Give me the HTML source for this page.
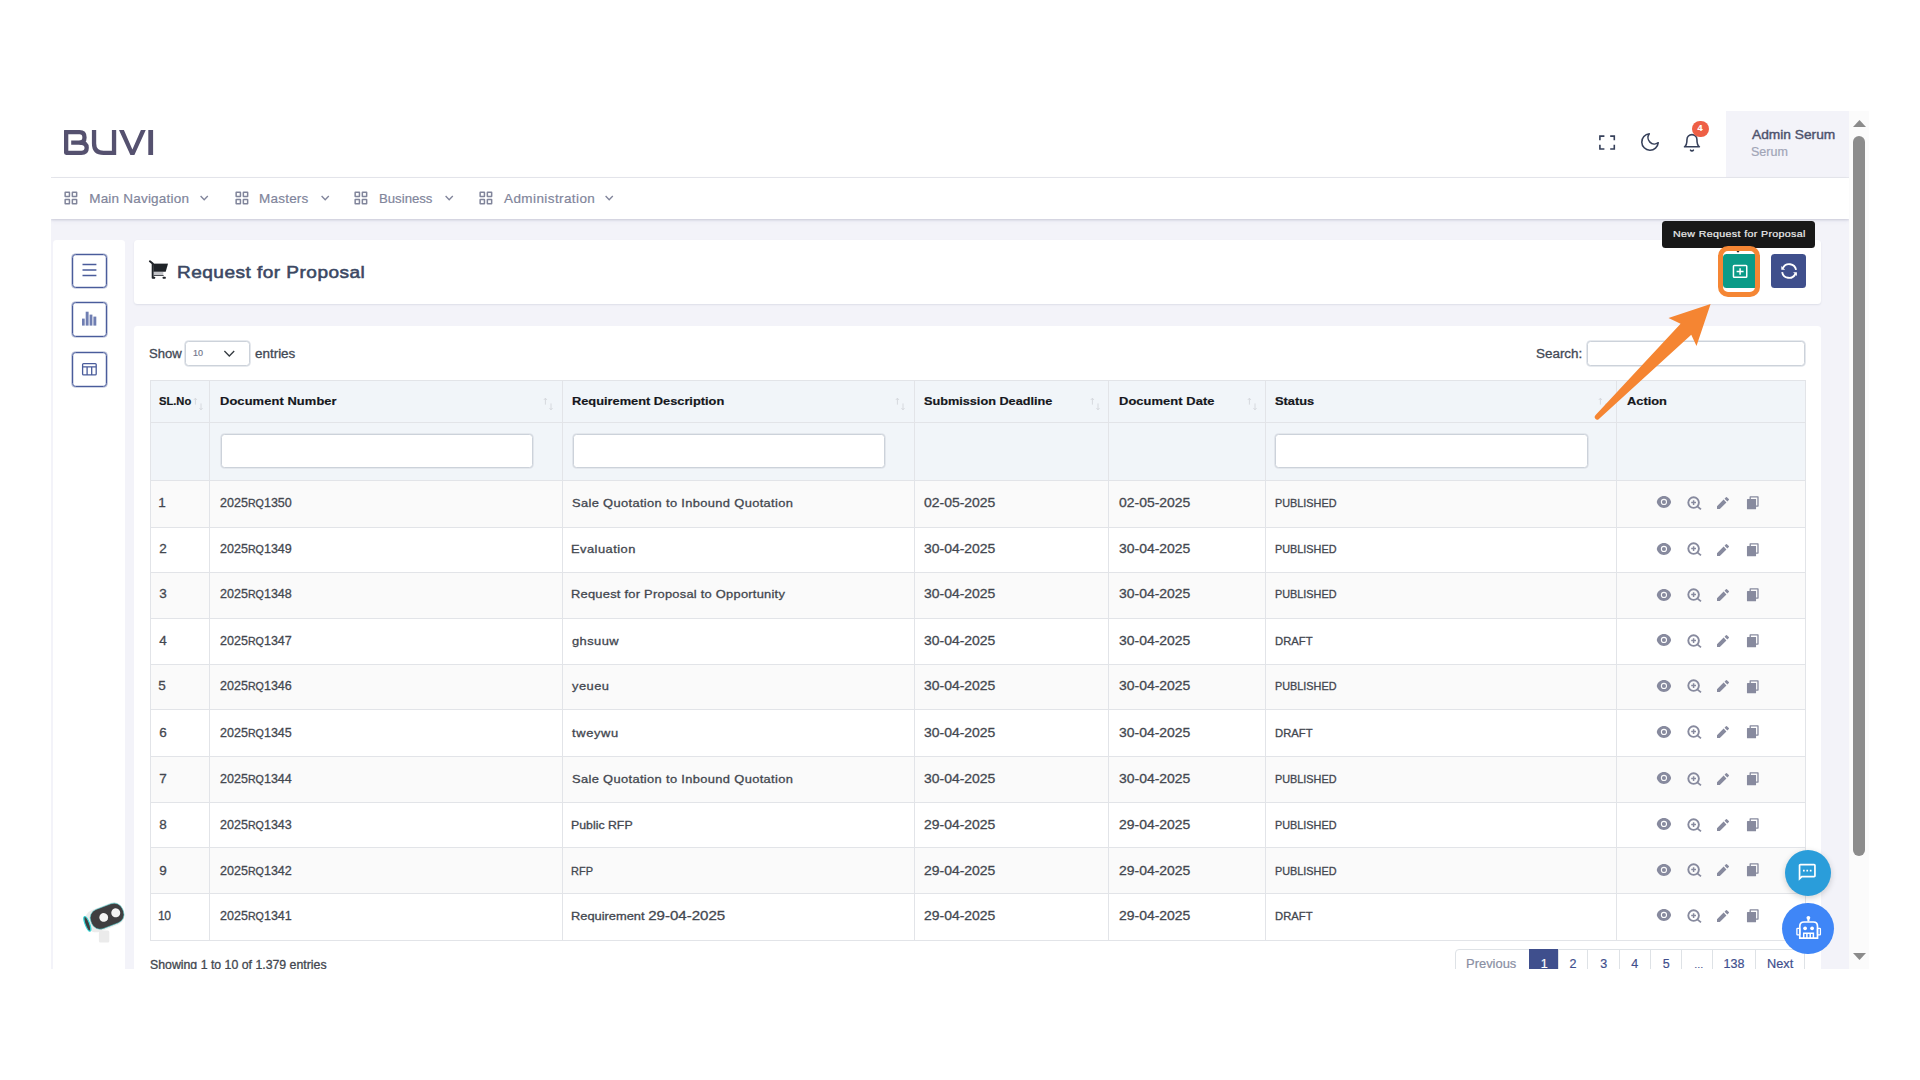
<!DOCTYPE html>
<html><head><meta charset="utf-8"><title>Request for Proposal</title>
<style>
html,body{margin:0;padding:0}
body{width:1920px;height:1080px;background:#fff;position:relative;overflow:hidden;font-family:"Liberation Sans",sans-serif}
#shot{position:absolute;left:51px;top:111px;width:1818px;height:858px;overflow:hidden;background:#f3f3f9}
#o{position:absolute;left:-51px;top:-111px;width:1920px;height:1080px}
#o div,#o svg,#o span.t{position:absolute}
span.t{white-space:nowrap;line-height:1;transform-origin:0 50%;-webkit-text-stroke-width:.2px}
span.m{-webkit-text-stroke-width:.55px}
span.u{-webkit-text-stroke-width:.38px}
span.c{-webkit-text-stroke-width:.3px}
.dg{font-size:1.174em}
</style></head><body><div id="shot"><div id="o">
<div style="left:51px;top:111px;width:1798px;height:66px;background:#fff"></div>
<div style="left:51px;top:177px;width:1798px;height:1px;background:#e8e9ee"></div>
<div style="left:1725.6px;top:111px;width:123.2px;height:66px;background:#f3f3f9"></div>
<div style="left:51px;top:178px;width:1798px;height:41px;background:#fff;box-shadow:0 1px 2px rgba(40,45,90,.16),0 2px 5px rgba(40,45,90,.05)"></div>
<svg style="left:64px;top:130.1px" width="90" height="25" viewBox="0 0 90 25" ><g fill="none" stroke="#55516f" stroke-width="4.3" stroke-linejoin="round"><path d="M2.15 0.3V22.85H17.4Q22.7 22.85 22.7 17.7Q22.7 12.6 15.6 12.6"/><path d="M7.2 12.6H15.6Q20.5 12.6 20.5 7.4Q20.5 2.15 15.6 2.15H0.3" stroke-linecap="butt"/><path d="M30.05 0V13.5Q30.05 22.85 39.5 22.85H50.05V0" stroke-linejoin="miter"/></g><polygon fill="#55516f" points="55,0 59.9,0 68.4,19.6 76.9,0 81.75,0 70.4,25 66.4,25"/><rect fill="#55516f" x="84.3" y="0" width="4.8" height="25"/></svg>
<svg style="left:63.5px;top:190.8px" width="14" height="14" viewBox="0 0 14 14" ><g fill="none" stroke="#81859b" stroke-width="1.5" transform="translate(.5 .5)"><rect x=".65" y=".65" width="4.3" height="4.3" rx=".25"/><rect x="7.85" y=".65" width="4.3" height="4.3" rx=".25"/><rect x=".65" y="7.95" width="4.3" height="4.3" rx=".25"/><rect x="7.85" y="7.95" width="4.3" height="4.3" rx=".25"/></g></svg>
<svg style="left:234.5px;top:190.8px" width="14" height="14" viewBox="0 0 14 14" ><g fill="none" stroke="#81859b" stroke-width="1.5" transform="translate(.5 .5)"><rect x=".65" y=".65" width="4.3" height="4.3" rx=".25"/><rect x="7.85" y=".65" width="4.3" height="4.3" rx=".25"/><rect x=".65" y="7.95" width="4.3" height="4.3" rx=".25"/><rect x="7.85" y="7.95" width="4.3" height="4.3" rx=".25"/></g></svg>
<svg style="left:354.1px;top:190.8px" width="14" height="14" viewBox="0 0 14 14" ><g fill="none" stroke="#81859b" stroke-width="1.5" transform="translate(.5 .5)"><rect x=".65" y=".65" width="4.3" height="4.3" rx=".25"/><rect x="7.85" y=".65" width="4.3" height="4.3" rx=".25"/><rect x=".65" y="7.95" width="4.3" height="4.3" rx=".25"/><rect x="7.85" y="7.95" width="4.3" height="4.3" rx=".25"/></g></svg>
<svg style="left:478.5px;top:190.8px" width="14" height="14" viewBox="0 0 14 14" ><g fill="none" stroke="#81859b" stroke-width="1.5" transform="translate(.5 .5)"><rect x=".65" y=".65" width="4.3" height="4.3" rx=".25"/><rect x="7.85" y=".65" width="4.3" height="4.3" rx=".25"/><rect x=".65" y="7.95" width="4.3" height="4.3" rx=".25"/><rect x="7.85" y="7.95" width="4.3" height="4.3" rx=".25"/></g></svg>
<svg style="left:199px;top:193.6px" width="11" height="8" viewBox="0 0 11 8" ><path d="M1.6 2L5.2 5.7L8.8 2" fill="none" stroke="#81859b" stroke-width="1.35"/></svg>
<svg style="left:319.7px;top:193.6px" width="11" height="8" viewBox="0 0 11 8" ><path d="M1.6 2L5.2 5.7L8.8 2" fill="none" stroke="#81859b" stroke-width="1.35"/></svg>
<svg style="left:444px;top:193.6px" width="11" height="8" viewBox="0 0 11 8" ><path d="M1.6 2L5.2 5.7L8.8 2" fill="none" stroke="#81859b" stroke-width="1.35"/></svg>
<svg style="left:604px;top:193.6px" width="11" height="8" viewBox="0 0 11 8" ><path d="M1.6 2L5.2 5.7L8.8 2" fill="none" stroke="#81859b" stroke-width="1.35"/></svg>
<svg style="left:1598px;top:134px" width="19" height="18" viewBox="0 0 19 18" ><path d="M1.9 6.3V2.1H6.4M12.2 2.1H16.3V6.3M16.3 10.8V15H12.2M6.4 15H1.9V10.8" fill="none" stroke="#36405a" stroke-width="1.6"/></svg>
<svg style="left:1638.75px;top:131.15px" width="22" height="22" viewBox="0 0 24 24" ><path d="M21 12.79A9 9 0 1 1 11.21 3 7 7 0 0 0 21 12.79z" fill="none" stroke="#36405a" stroke-width="1.7" stroke-linejoin="round"/></svg>
<svg style="left:1681.6px;top:132.55px" width="19.9" height="19.5" viewBox="0 0 24 24" preserveAspectRatio="none"><g fill="none" stroke="#36405a" stroke-width="1.9" stroke-linecap="round" stroke-linejoin="round"><path d="M18 8A6 6 0 0 0 6 8c0 7-3 9-3 9h18s-3-2-3-9"/><path d="M13.73 21a2 2 0 0 1-3.46 0"/></g></svg>
<div style="left:1691.6px;top:121px;width:17.9px;height:15.6px;background:#ee5f45;border-radius:8px"></div>
<div style="left:1848.6px;top:111px;width:20.4px;height:858px;background:#fbfbfb"></div>
<svg style="left:1852.6px;top:119.8px" width="13" height="7" viewBox="0 0 13 7" ><path d="M0 7L6.5 0L13 7Z" fill="#8b8b8b"/></svg>
<div style="left:1853.1px;top:136.3px;width:12.1px;height:719.3px;background:#8c8c8c;border-radius:6px"></div>
<svg style="left:1852.6px;top:952.6px" width="13" height="7" viewBox="0 0 13 7" ><path d="M0 0L6.5 7L13 0Z" fill="#8b8b8b"/></svg>
<div style="left:52.5px;top:240.2px;width:72.4px;height:760px;background:#fff;border-radius:3.5px"></div>
<div style="left:72.2px;top:254px;width:34.4px;height:34.4px;box-sizing:border-box;border:1px solid #4a5c9b;border-radius:3.5px;box-shadow:0 0 0 .6px rgba(74,92,155,.5),inset 0 0 0 .5px rgba(74,92,155,.45)"></div>
<div style="left:72.2px;top:302.3px;width:34.4px;height:34.4px;box-sizing:border-box;border:1px solid #4a5c9b;border-radius:3.5px;box-shadow:0 0 0 .6px rgba(74,92,155,.5),inset 0 0 0 .5px rgba(74,92,155,.45)"></div>
<div style="left:72.2px;top:352.2px;width:34.4px;height:34.4px;box-sizing:border-box;border:1px solid #4a5c9b;border-radius:3.5px;box-shadow:0 0 0 .6px rgba(74,92,155,.5),inset 0 0 0 .5px rgba(74,92,155,.45)"></div>
<svg style="left:80px;top:262px" width="20" height="16" viewBox="0 0 20 16" ><path d="M2.5 2.5H16.4M2.5 8H16.4M2.5 13.4H16.4" stroke="#4a5c9b" stroke-width="1.45" fill="none"/></svg>
<svg style="left:80px;top:310px" width="20" height="17" viewBox="0 0 20 17" ><g fill="#6f7eb2"><rect x="2" y="8.6" width="2.7" height="7"/><rect x="5.7" y="1.7" width="2.9" height="13.9"/><rect x="9.6" y="4.6" width="2.8" height="11"/><rect x="13.4" y="6.6" width="2.9" height="9"/></g></svg>
<svg style="left:80px;top:361px" width="20" height="17" viewBox="0 0 20 17" ><g fill="none" stroke="#4a5c9b" stroke-width="1.3"><rect x="2.6" y="2.6" width="13.6" height="11.3" rx="1"/><path d="M2.6 5.9H16.2M7.1 5.9V13.9M11.7 5.9V13.9"/></g></svg>
<svg style="left:80px;top:895px" width="50" height="52" viewBox="0 0 50 52" ><rect x="18.9" y="35.5" width="10.4" height="12" rx="1.5" fill="#ebebeb"/><g transform="translate(-1.4 -0.5) rotate(-21 27 22)"><rect x="6" y="11" width="40" height="23" rx="10" fill="#ececec"/><rect x="11.5" y="12" width="34" height="20.5" rx="9" fill="#3f3e40" stroke="#55d9d9" stroke-width=".5"/><circle cx="24.9" cy="22.2" r="4.4" fill="#f4f4f4"/><circle cx="37.8" cy="22.2" r="4.5" fill="#f4f4f4"/><ellipse cx="7.3" cy="22.3" rx="2.2" ry="7.8" fill="#3f3e40" stroke="#35d6d6" stroke-width="1.2"/></g></svg>
<div style="left:134px;top:240.2px;width:1687.3px;height:63.4px;background:#fff;border-radius:3.5px;box-shadow:0 1px 2px rgba(40,50,90,.10)"></div>
<svg style="left:148px;top:259px" width="22" height="22" viewBox="0 0 22 22" ><path d="M1.9 2.3L5 4.8" stroke="#20242a" stroke-width="2" stroke-linecap="round" fill="none"/><rect x="3.7" y="4.4" width="2" height="14.9" fill="#20242a"/><polygon points="5.2,4.7 20,4.7 17.7,12.7 5.6,12.7" fill="#1f2328"/><rect x="5.7" y="4.2" width="14.2" height=".6" fill="#9a9ca0"/><rect x="5.9" y="13" width="9.4" height="3" fill="#c3c4c8"/><rect x="5.7" y="16" width="9.9" height="1" fill="#4a4d52"/><rect x="4.2" y="17.7" width="2.9" height="2.1" rx=".5" fill="#20242a"/><rect x="14.7" y="17.7" width="3" height="2.1" rx=".5" fill="#20242a"/></svg>
<div style="left:1722.6px;top:253.9px;width:35px;height:34.6px;background:#0a9b88;border-radius:3.5px"></div>
<svg style="left:1731px;top:263px" width="18" height="17" viewBox="0 0 18 17" ><g fill="none" stroke="#fff" stroke-width="1.5"><rect x="2.45" y="2.55" width="13.3" height="11.8" rx=".8"/><path d="M9.1 5.2V11.7M5.6 8.45H12.6"/></g></svg>
<div style="left:1771.3px;top:253.9px;width:34.6px;height:34.6px;background:#3f4f8c;border-radius:3.5px"></div>
<svg style="left:1779px;top:261.3px" width="20" height="20" viewBox="0 0 20 20" ><g transform="translate(20.2 0) scale(-1 1)"><g fill="none" stroke="#fff" stroke-width="1.9"><path d="M3.15 8.9A7 7 0 0 1 16.3 7"/><path d="M17.05 11.1A7 7 0 0 1 3.9 13"/></g><path d="M17.9 4.9V8.7H14.1Z M2.3 15.1V11.3H6.1Z" fill="#fff"/></g></svg>
<div style="left:1661.9px;top:221px;width:153px;height:27.1px;background:#181818;border-radius:3.5px"></div>
<svg style="left:1733.9px;top:248px" width="8" height="5" viewBox="0 0 8 5" ><path d="M0 0L4 4.8L8 0Z" fill="#181818"/></svg>
<div style="left:1718.1px;top:246px;width:41.7px;height:50.6px;box-sizing:border-box;border:5px solid #f58634;border-radius:10px"></div>
<div style="left:134px;top:326px;width:1687.3px;height:700px;background:#fff;border-radius:3.5px"></div>
<div style="left:184.7px;top:341.4px;width:65.8px;height:24.2px;border:1px solid #ccd2da;box-shadow:0 0 0 .8px #dfe3e9;border-radius:3.5px;background:#fff;box-sizing:border-box"></div>
<svg style="left:223px;top:349px" width="13" height="9" viewBox="0 0 13 9" ><path d="M1.4 2L6.3 7L11.2 2" fill="none" stroke="#343a40" stroke-width="1.3"/></svg>
<div style="left:1587.2px;top:341.4px;width:218.3px;height:24.2px;border:1px solid #ccd2da;box-shadow:0 0 0 .8px #dfe3e9;border-radius:3.5px;background:#fff;box-sizing:border-box"></div>
<div style="left:150.2px;top:380.4px;width:1655.1px;height:100px;background:#f1f5f9"></div>
<div style="left:150.2px;top:480.4px;width:1655.1px;height:46.7px;background:#fafafa"></div>
<div style="left:150.2px;top:572.7px;width:1655.1px;height:45.5px;background:#fafafa"></div>
<div style="left:150.2px;top:664px;width:1655.1px;height:45.7px;background:#fafafa"></div>
<div style="left:150.2px;top:756.5px;width:1655.1px;height:45.8px;background:#fafafa"></div>
<div style="left:150.2px;top:847.9px;width:1655.1px;height:45.7px;background:#fafafa"></div>
<div style="left:149.7px;top:380px;width:1656.1px;height:1px;background:#e2e4e8"></div>
<div style="left:149.7px;top:422px;width:1656.1px;height:1px;background:#e2e4e8"></div>
<div style="left:149.7px;top:480px;width:1656.1px;height:1px;background:#e2e4e8"></div>
<div style="left:149.7px;top:527px;width:1656.1px;height:1px;background:#e2e4e8"></div>
<div style="left:149.7px;top:572px;width:1656.1px;height:1px;background:#e2e4e8"></div>
<div style="left:149.7px;top:618px;width:1656.1px;height:1px;background:#e2e4e8"></div>
<div style="left:149.7px;top:664px;width:1656.1px;height:1px;background:#e2e4e8"></div>
<div style="left:149.7px;top:709px;width:1656.1px;height:1px;background:#e2e4e8"></div>
<div style="left:149.7px;top:756px;width:1656.1px;height:1px;background:#e2e4e8"></div>
<div style="left:149.7px;top:802px;width:1656.1px;height:1px;background:#e2e4e8"></div>
<div style="left:149.7px;top:847px;width:1656.1px;height:1px;background:#e2e4e8"></div>
<div style="left:149.7px;top:893px;width:1656.1px;height:1px;background:#e2e4e8"></div>
<div style="left:149.7px;top:940px;width:1656.1px;height:1px;background:#e2e4e8"></div>
<div style="left:150px;top:379.9px;width:1px;height:561.2px;background:#e2e4e8"></div>
<div style="left:209px;top:379.9px;width:1px;height:561.2px;background:#e2e4e8"></div>
<div style="left:562px;top:379.9px;width:1px;height:561.2px;background:#e2e4e8"></div>
<div style="left:914px;top:379.9px;width:1px;height:561.2px;background:#e2e4e8"></div>
<div style="left:1108px;top:379.9px;width:1px;height:561.2px;background:#e2e4e8"></div>
<div style="left:1265px;top:379.9px;width:1px;height:561.2px;background:#e2e4e8"></div>
<div style="left:1616px;top:379.9px;width:1px;height:561.2px;background:#e2e4e8"></div>
<div style="left:1805px;top:379.9px;width:1px;height:561.2px;background:#e2e4e8"></div>
<div style="left:220.8px;top:434.3px;width:312.5px;height:33.7px;border:1px solid #ccd2da;box-shadow:0 0 0 .8px #dfe3e9;border-radius:3.5px;background:#fff;box-sizing:border-box"></div>
<div style="left:572.5px;top:434.3px;width:312.5px;height:33.7px;border:1px solid #ccd2da;box-shadow:0 0 0 .8px #dfe3e9;border-radius:3.5px;background:#fff;box-sizing:border-box"></div>
<div style="left:1275px;top:434.3px;width:313px;height:33.7px;border:1px solid #ccd2da;box-shadow:0 0 0 .8px #dfe3e9;border-radius:3.5px;background:#fff;box-sizing:border-box"></div>
<svg style="left:191.5px;top:396px" width="14" height="16" viewBox="0 0 14 16" ><g stroke="#d6d9de" stroke-width="1" fill="none"><path d="M3.4 2.2V8.6M1.9 3.9L3.4 2.2L4.9 3.9"/><path d="M9 7.4V13.8M7.5 12.1L9 13.8L10.5 12.1"/></g></svg>
<svg style="left:542.3px;top:396px" width="14" height="16" viewBox="0 0 14 16" ><g stroke="#d6d9de" stroke-width="1" fill="none"><path d="M3.4 2.2V8.6M1.9 3.9L3.4 2.2L4.9 3.9"/><path d="M9 7.4V13.8M7.5 12.1L9 13.8L10.5 12.1"/></g></svg>
<svg style="left:894.3px;top:396px" width="14" height="16" viewBox="0 0 14 16" ><g stroke="#d6d9de" stroke-width="1" fill="none"><path d="M3.4 2.2V8.6M1.9 3.9L3.4 2.2L4.9 3.9"/><path d="M9 7.4V13.8M7.5 12.1L9 13.8L10.5 12.1"/></g></svg>
<svg style="left:1089px;top:396px" width="14" height="16" viewBox="0 0 14 16" ><g stroke="#d6d9de" stroke-width="1" fill="none"><path d="M3.4 2.2V8.6M1.9 3.9L3.4 2.2L4.9 3.9"/><path d="M9 7.4V13.8M7.5 12.1L9 13.8L10.5 12.1"/></g></svg>
<svg style="left:1246px;top:396px" width="14" height="16" viewBox="0 0 14 16" ><g stroke="#d6d9de" stroke-width="1" fill="none"><path d="M3.4 2.2V8.6M1.9 3.9L3.4 2.2L4.9 3.9"/><path d="M9 7.4V13.8M7.5 12.1L9 13.8L10.5 12.1"/></g></svg>
<svg style="left:1596.5px;top:396px" width="14" height="16" viewBox="0 0 14 16" ><g stroke="#d6d9de" stroke-width="1" fill="none"><path d="M3.4 2.2V8.6M1.9 3.9L3.4 2.2L4.9 3.9"/><path d="M9 7.4V13.8M7.5 12.1L9 13.8L10.5 12.1"/></g></svg>
<svg style="left:1656.1px;top:494.2px" width="15.9" height="15.9" viewBox="0 0 24 24" ><path fill="#878a9e" d="M1.181 12C2.121 6.88 6.608 3 12 3c5.392 0 9.878 3.88 10.819 9-.94 5.12-5.427 9-10.819 9-5.392 0-9.878-3.88-10.819-9zM12 16.7a4.7 4.7 0 1 0 0-9.4 4.7 4.7 0 0 0 0 9.4zm0-1.6a3.1 3.1 0 1 1 0-6.2 3.1 3.1 0 0 1 0 6.2z"/></svg>
<svg style="left:1685.5px;top:494.7px" width="17" height="16" viewBox="0 0 17 16" ><g fill="none" stroke="#878a9e"><circle cx="7.6" cy="7.6" r="5.3" stroke-width="1.9"/><path d="M11.6 11.6L15 14.4" stroke-width="1.8"/><path d="M5.2 7.6H10M7.6 5.2V10" stroke-width="1.5"/></g></svg>
<svg style="left:1715.2px;top:494.8px" width="16" height="16" viewBox="0 0 24 24" ><path fill="#878a9e" d="M12.9 6.858l4.242 4.243L7.242 21H3v-4.243l9.9-9.9zm1.414-1.414l2.121-2.122a1 1 0 0 1 1.414 0l2.829 2.829a1 1 0 0 1 0 1.414l-2.122 2.121-4.242-4.242z"/></svg>
<svg style="left:1745.3px;top:494.9px" width="15.6" height="15.6" viewBox="0 0 24 24" ><path fill="#878a9e" d="M7 6V3a1 1 0 0 1 1-1h12a1 1 0 0 1 1 1v14a1 1 0 0 1-1 1h-3v3c0 .552-.45 1-1.007 1H4.007A1.001 1.001 0 0 1 3 21l.003-14c0-.552.45-1 1.007-1H7zm2 0h8v10h2V4H9v2z"/></svg>
<svg style="left:1656.1px;top:540.9px" width="15.9" height="15.9" viewBox="0 0 24 24" ><path fill="#878a9e" d="M1.181 12C2.121 6.88 6.608 3 12 3c5.392 0 9.878 3.88 10.819 9-.94 5.12-5.427 9-10.819 9-5.392 0-9.878-3.88-10.819-9zM12 16.7a4.7 4.7 0 1 0 0-9.4 4.7 4.7 0 0 0 0 9.4zm0-1.6a3.1 3.1 0 1 1 0-6.2 3.1 3.1 0 0 1 0 6.2z"/></svg>
<svg style="left:1685.5px;top:541.4px" width="17" height="16" viewBox="0 0 17 16" ><g fill="none" stroke="#878a9e"><circle cx="7.6" cy="7.6" r="5.3" stroke-width="1.9"/><path d="M11.6 11.6L15 14.4" stroke-width="1.8"/><path d="M5.2 7.6H10M7.6 5.2V10" stroke-width="1.5"/></g></svg>
<svg style="left:1715.2px;top:541.5px" width="16" height="16" viewBox="0 0 24 24" ><path fill="#878a9e" d="M12.9 6.858l4.242 4.243L7.242 21H3v-4.243l9.9-9.9zm1.414-1.414l2.121-2.122a1 1 0 0 1 1.414 0l2.829 2.829a1 1 0 0 1 0 1.414l-2.122 2.121-4.242-4.242z"/></svg>
<svg style="left:1745.3px;top:541.6px" width="15.6" height="15.6" viewBox="0 0 24 24" ><path fill="#878a9e" d="M7 6V3a1 1 0 0 1 1-1h12a1 1 0 0 1 1 1v14a1 1 0 0 1-1 1h-3v3c0 .552-.45 1-1.007 1H4.007A1.001 1.001 0 0 1 3 21l.003-14c0-.552.45-1 1.007-1H7zm2 0h8v10h2V4H9v2z"/></svg>
<svg style="left:1656.1px;top:586.5px" width="15.9" height="15.9" viewBox="0 0 24 24" ><path fill="#878a9e" d="M1.181 12C2.121 6.88 6.608 3 12 3c5.392 0 9.878 3.88 10.819 9-.94 5.12-5.427 9-10.819 9-5.392 0-9.878-3.88-10.819-9zM12 16.7a4.7 4.7 0 1 0 0-9.4 4.7 4.7 0 0 0 0 9.4zm0-1.6a3.1 3.1 0 1 1 0-6.2 3.1 3.1 0 0 1 0 6.2z"/></svg>
<svg style="left:1685.5px;top:587px" width="17" height="16" viewBox="0 0 17 16" ><g fill="none" stroke="#878a9e"><circle cx="7.6" cy="7.6" r="5.3" stroke-width="1.9"/><path d="M11.6 11.6L15 14.4" stroke-width="1.8"/><path d="M5.2 7.6H10M7.6 5.2V10" stroke-width="1.5"/></g></svg>
<svg style="left:1715.2px;top:587.1px" width="16" height="16" viewBox="0 0 24 24" ><path fill="#878a9e" d="M12.9 6.858l4.242 4.243L7.242 21H3v-4.243l9.9-9.9zm1.414-1.414l2.121-2.122a1 1 0 0 1 1.414 0l2.829 2.829a1 1 0 0 1 0 1.414l-2.122 2.121-4.242-4.242z"/></svg>
<svg style="left:1745.3px;top:587.2px" width="15.6" height="15.6" viewBox="0 0 24 24" ><path fill="#878a9e" d="M7 6V3a1 1 0 0 1 1-1h12a1 1 0 0 1 1 1v14a1 1 0 0 1-1 1h-3v3c0 .552-.45 1-1.007 1H4.007A1.001 1.001 0 0 1 3 21l.003-14c0-.552.45-1 1.007-1H7zm2 0h8v10h2V4H9v2z"/></svg>
<svg style="left:1656.1px;top:632px" width="15.9" height="15.9" viewBox="0 0 24 24" ><path fill="#878a9e" d="M1.181 12C2.121 6.88 6.608 3 12 3c5.392 0 9.878 3.88 10.819 9-.94 5.12-5.427 9-10.819 9-5.392 0-9.878-3.88-10.819-9zM12 16.7a4.7 4.7 0 1 0 0-9.4 4.7 4.7 0 0 0 0 9.4zm0-1.6a3.1 3.1 0 1 1 0-6.2 3.1 3.1 0 0 1 0 6.2z"/></svg>
<svg style="left:1685.5px;top:632.5px" width="17" height="16" viewBox="0 0 17 16" ><g fill="none" stroke="#878a9e"><circle cx="7.6" cy="7.6" r="5.3" stroke-width="1.9"/><path d="M11.6 11.6L15 14.4" stroke-width="1.8"/><path d="M5.2 7.6H10M7.6 5.2V10" stroke-width="1.5"/></g></svg>
<svg style="left:1715.2px;top:632.6px" width="16" height="16" viewBox="0 0 24 24" ><path fill="#878a9e" d="M12.9 6.858l4.242 4.243L7.242 21H3v-4.243l9.9-9.9zm1.414-1.414l2.121-2.122a1 1 0 0 1 1.414 0l2.829 2.829a1 1 0 0 1 0 1.414l-2.122 2.121-4.242-4.242z"/></svg>
<svg style="left:1745.3px;top:632.7px" width="15.6" height="15.6" viewBox="0 0 24 24" ><path fill="#878a9e" d="M7 6V3a1 1 0 0 1 1-1h12a1 1 0 0 1 1 1v14a1 1 0 0 1-1 1h-3v3c0 .552-.45 1-1.007 1H4.007A1.001 1.001 0 0 1 3 21l.003-14c0-.552.45-1 1.007-1H7zm2 0h8v10h2V4H9v2z"/></svg>
<svg style="left:1656.1px;top:677.8px" width="15.9" height="15.9" viewBox="0 0 24 24" ><path fill="#878a9e" d="M1.181 12C2.121 6.88 6.608 3 12 3c5.392 0 9.878 3.88 10.819 9-.94 5.12-5.427 9-10.819 9-5.392 0-9.878-3.88-10.819-9zM12 16.7a4.7 4.7 0 1 0 0-9.4 4.7 4.7 0 0 0 0 9.4zm0-1.6a3.1 3.1 0 1 1 0-6.2 3.1 3.1 0 0 1 0 6.2z"/></svg>
<svg style="left:1685.5px;top:678.3px" width="17" height="16" viewBox="0 0 17 16" ><g fill="none" stroke="#878a9e"><circle cx="7.6" cy="7.6" r="5.3" stroke-width="1.9"/><path d="M11.6 11.6L15 14.4" stroke-width="1.8"/><path d="M5.2 7.6H10M7.6 5.2V10" stroke-width="1.5"/></g></svg>
<svg style="left:1715.2px;top:678.4px" width="16" height="16" viewBox="0 0 24 24" ><path fill="#878a9e" d="M12.9 6.858l4.242 4.243L7.242 21H3v-4.243l9.9-9.9zm1.414-1.414l2.121-2.122a1 1 0 0 1 1.414 0l2.829 2.829a1 1 0 0 1 0 1.414l-2.122 2.121-4.242-4.242z"/></svg>
<svg style="left:1745.3px;top:678.5px" width="15.6" height="15.6" viewBox="0 0 24 24" ><path fill="#878a9e" d="M7 6V3a1 1 0 0 1 1-1h12a1 1 0 0 1 1 1v14a1 1 0 0 1-1 1h-3v3c0 .552-.45 1-1.007 1H4.007A1.001 1.001 0 0 1 3 21l.003-14c0-.552.45-1 1.007-1H7zm2 0h8v10h2V4H9v2z"/></svg>
<svg style="left:1656.1px;top:723.5px" width="15.9" height="15.9" viewBox="0 0 24 24" ><path fill="#878a9e" d="M1.181 12C2.121 6.88 6.608 3 12 3c5.392 0 9.878 3.88 10.819 9-.94 5.12-5.427 9-10.819 9-5.392 0-9.878-3.88-10.819-9zM12 16.7a4.7 4.7 0 1 0 0-9.4 4.7 4.7 0 0 0 0 9.4zm0-1.6a3.1 3.1 0 1 1 0-6.2 3.1 3.1 0 0 1 0 6.2z"/></svg>
<svg style="left:1685.5px;top:724px" width="17" height="16" viewBox="0 0 17 16" ><g fill="none" stroke="#878a9e"><circle cx="7.6" cy="7.6" r="5.3" stroke-width="1.9"/><path d="M11.6 11.6L15 14.4" stroke-width="1.8"/><path d="M5.2 7.6H10M7.6 5.2V10" stroke-width="1.5"/></g></svg>
<svg style="left:1715.2px;top:724.1px" width="16" height="16" viewBox="0 0 24 24" ><path fill="#878a9e" d="M12.9 6.858l4.242 4.243L7.242 21H3v-4.243l9.9-9.9zm1.414-1.414l2.121-2.122a1 1 0 0 1 1.414 0l2.829 2.829a1 1 0 0 1 0 1.414l-2.122 2.121-4.242-4.242z"/></svg>
<svg style="left:1745.3px;top:724.2px" width="15.6" height="15.6" viewBox="0 0 24 24" ><path fill="#878a9e" d="M7 6V3a1 1 0 0 1 1-1h12a1 1 0 0 1 1 1v14a1 1 0 0 1-1 1h-3v3c0 .552-.45 1-1.007 1H4.007A1.001 1.001 0 0 1 3 21l.003-14c0-.552.45-1 1.007-1H7zm2 0h8v10h2V4H9v2z"/></svg>
<svg style="left:1656.1px;top:770.3px" width="15.9" height="15.9" viewBox="0 0 24 24" ><path fill="#878a9e" d="M1.181 12C2.121 6.88 6.608 3 12 3c5.392 0 9.878 3.88 10.819 9-.94 5.12-5.427 9-10.819 9-5.392 0-9.878-3.88-10.819-9zM12 16.7a4.7 4.7 0 1 0 0-9.4 4.7 4.7 0 0 0 0 9.4zm0-1.6a3.1 3.1 0 1 1 0-6.2 3.1 3.1 0 0 1 0 6.2z"/></svg>
<svg style="left:1685.5px;top:770.8px" width="17" height="16" viewBox="0 0 17 16" ><g fill="none" stroke="#878a9e"><circle cx="7.6" cy="7.6" r="5.3" stroke-width="1.9"/><path d="M11.6 11.6L15 14.4" stroke-width="1.8"/><path d="M5.2 7.6H10M7.6 5.2V10" stroke-width="1.5"/></g></svg>
<svg style="left:1715.2px;top:770.9px" width="16" height="16" viewBox="0 0 24 24" ><path fill="#878a9e" d="M12.9 6.858l4.242 4.243L7.242 21H3v-4.243l9.9-9.9zm1.414-1.414l2.121-2.122a1 1 0 0 1 1.414 0l2.829 2.829a1 1 0 0 1 0 1.414l-2.122 2.121-4.242-4.242z"/></svg>
<svg style="left:1745.3px;top:771px" width="15.6" height="15.6" viewBox="0 0 24 24" ><path fill="#878a9e" d="M7 6V3a1 1 0 0 1 1-1h12a1 1 0 0 1 1 1v14a1 1 0 0 1-1 1h-3v3c0 .552-.45 1-1.007 1H4.007A1.001 1.001 0 0 1 3 21l.003-14c0-.552.45-1 1.007-1H7zm2 0h8v10h2V4H9v2z"/></svg>
<svg style="left:1656.1px;top:816.1px" width="15.9" height="15.9" viewBox="0 0 24 24" ><path fill="#878a9e" d="M1.181 12C2.121 6.88 6.608 3 12 3c5.392 0 9.878 3.88 10.819 9-.94 5.12-5.427 9-10.819 9-5.392 0-9.878-3.88-10.819-9zM12 16.7a4.7 4.7 0 1 0 0-9.4 4.7 4.7 0 0 0 0 9.4zm0-1.6a3.1 3.1 0 1 1 0-6.2 3.1 3.1 0 0 1 0 6.2z"/></svg>
<svg style="left:1685.5px;top:816.6px" width="17" height="16" viewBox="0 0 17 16" ><g fill="none" stroke="#878a9e"><circle cx="7.6" cy="7.6" r="5.3" stroke-width="1.9"/><path d="M11.6 11.6L15 14.4" stroke-width="1.8"/><path d="M5.2 7.6H10M7.6 5.2V10" stroke-width="1.5"/></g></svg>
<svg style="left:1715.2px;top:816.7px" width="16" height="16" viewBox="0 0 24 24" ><path fill="#878a9e" d="M12.9 6.858l4.242 4.243L7.242 21H3v-4.243l9.9-9.9zm1.414-1.414l2.121-2.122a1 1 0 0 1 1.414 0l2.829 2.829a1 1 0 0 1 0 1.414l-2.122 2.121-4.242-4.242z"/></svg>
<svg style="left:1745.3px;top:816.8px" width="15.6" height="15.6" viewBox="0 0 24 24" ><path fill="#878a9e" d="M7 6V3a1 1 0 0 1 1-1h12a1 1 0 0 1 1 1v14a1 1 0 0 1-1 1h-3v3c0 .552-.45 1-1.007 1H4.007A1.001 1.001 0 0 1 3 21l.003-14c0-.552.45-1 1.007-1H7zm2 0h8v10h2V4H9v2z"/></svg>
<svg style="left:1656.1px;top:861.7px" width="15.9" height="15.9" viewBox="0 0 24 24" ><path fill="#878a9e" d="M1.181 12C2.121 6.88 6.608 3 12 3c5.392 0 9.878 3.88 10.819 9-.94 5.12-5.427 9-10.819 9-5.392 0-9.878-3.88-10.819-9zM12 16.7a4.7 4.7 0 1 0 0-9.4 4.7 4.7 0 0 0 0 9.4zm0-1.6a3.1 3.1 0 1 1 0-6.2 3.1 3.1 0 0 1 0 6.2z"/></svg>
<svg style="left:1685.5px;top:862.2px" width="17" height="16" viewBox="0 0 17 16" ><g fill="none" stroke="#878a9e"><circle cx="7.6" cy="7.6" r="5.3" stroke-width="1.9"/><path d="M11.6 11.6L15 14.4" stroke-width="1.8"/><path d="M5.2 7.6H10M7.6 5.2V10" stroke-width="1.5"/></g></svg>
<svg style="left:1715.2px;top:862.3px" width="16" height="16" viewBox="0 0 24 24" ><path fill="#878a9e" d="M12.9 6.858l4.242 4.243L7.242 21H3v-4.243l9.9-9.9zm1.414-1.414l2.121-2.122a1 1 0 0 1 1.414 0l2.829 2.829a1 1 0 0 1 0 1.414l-2.122 2.121-4.242-4.242z"/></svg>
<svg style="left:1745.3px;top:862.4px" width="15.6" height="15.6" viewBox="0 0 24 24" ><path fill="#878a9e" d="M7 6V3a1 1 0 0 1 1-1h12a1 1 0 0 1 1 1v14a1 1 0 0 1-1 1h-3v3c0 .552-.45 1-1.007 1H4.007A1.001 1.001 0 0 1 3 21l.003-14c0-.552.45-1 1.007-1H7zm2 0h8v10h2V4H9v2z"/></svg>
<svg style="left:1656.1px;top:907.4px" width="15.9" height="15.9" viewBox="0 0 24 24" ><path fill="#878a9e" d="M1.181 12C2.121 6.88 6.608 3 12 3c5.392 0 9.878 3.88 10.819 9-.94 5.12-5.427 9-10.819 9-5.392 0-9.878-3.88-10.819-9zM12 16.7a4.7 4.7 0 1 0 0-9.4 4.7 4.7 0 0 0 0 9.4zm0-1.6a3.1 3.1 0 1 1 0-6.2 3.1 3.1 0 0 1 0 6.2z"/></svg>
<svg style="left:1685.5px;top:907.9px" width="17" height="16" viewBox="0 0 17 16" ><g fill="none" stroke="#878a9e"><circle cx="7.6" cy="7.6" r="5.3" stroke-width="1.9"/><path d="M11.6 11.6L15 14.4" stroke-width="1.8"/><path d="M5.2 7.6H10M7.6 5.2V10" stroke-width="1.5"/></g></svg>
<svg style="left:1715.2px;top:908px" width="16" height="16" viewBox="0 0 24 24" ><path fill="#878a9e" d="M12.9 6.858l4.242 4.243L7.242 21H3v-4.243l9.9-9.9zm1.414-1.414l2.121-2.122a1 1 0 0 1 1.414 0l2.829 2.829a1 1 0 0 1 0 1.414l-2.122 2.121-4.242-4.242z"/></svg>
<svg style="left:1745.3px;top:908.1px" width="15.6" height="15.6" viewBox="0 0 24 24" ><path fill="#878a9e" d="M7 6V3a1 1 0 0 1 1-1h12a1 1 0 0 1 1 1v14a1 1 0 0 1-1 1h-3v3c0 .552-.45 1-1.007 1H4.007A1.001 1.001 0 0 1 3 21l.003-14c0-.552.45-1 1.007-1H7zm2 0h8v10h2V4H9v2z"/></svg>
<div style="left:1454.9px;top:948.8px;width:350px;height:30px;box-sizing:border-box;border:1px solid #dee2e6;border-radius:4px;background:#fff"></div>
<div style="left:1528.6px;top:948.8px;width:1px;height:30px;background:#dee2e6"></div>
<div style="left:1557.5px;top:948.8px;width:1px;height:30px;background:#dee2e6"></div>
<div style="left:1587.3px;top:948.8px;width:1px;height:30px;background:#dee2e6"></div>
<div style="left:1618.7px;top:948.8px;width:1px;height:30px;background:#dee2e6"></div>
<div style="left:1649.9px;top:948.8px;width:1px;height:30px;background:#dee2e6"></div>
<div style="left:1681.25px;top:948.8px;width:1px;height:30px;background:#dee2e6"></div>
<div style="left:1712.2px;top:948.8px;width:1px;height:30px;background:#dee2e6"></div>
<div style="left:1754.5px;top:948.8px;width:1px;height:30px;background:#dee2e6"></div>
<div style="left:1529.1px;top:948.7px;width:28.9px;height:31px;background:#3f4f8d"></div>
<div style="left:1785px;top:850.1px;width:45.9px;height:45.9px;background:#2a9dda;border-radius:50%;box-shadow:0 2px 6px rgba(0,0,0,.18)"></div>
<svg style="left:1797.2px;top:862.3px" width="20.5" height="20.5" viewBox="0 0 24 24" ><path fill="#fff" d="M20 2H4c-1.1 0-2 .9-2 2v18l4-4h14c1.1 0 2-.9 2-2V4c0-1.1-.9-2-2-2zm0 14H5.17L4 17.17V4h16v12zM7 9h2v2H7zm4 0h2v2h-2zm4 0h2v2h-2z"/></svg>
<div style="left:1782.3px;top:902.8px;width:51.3px;height:51.3px;background:#3f86f7;border-radius:50%"></div>
<svg style="left:1794px;top:914px" width="30" height="27" viewBox="0 0 30 27" ><g fill="none" stroke="#fff" stroke-width="1.7"><path d="M5.8 24.1V12.2Q5.8 8 10 8H19.4Q23.5 8 23.5 12.2V24.1Z"/><path d="M14.4 7.4V4.6" stroke-width="2"/><rect x="2.9" y="14.3" width="2.9" height="6.6" rx=".6" stroke-width="1.3"/><rect x="23.5" y="14.3" width="2.9" height="6.6" rx=".6" stroke-width="1.3"/><path d="M9.7 24.1V19.3H19.4V24.1M12.9 19.3V24.1M16.2 19.3V24.1" stroke-width="1.5"/></g><circle cx="14.4" cy="3.8" r="1.9" fill="#fff"/><circle cx="11.1" cy="14.3" r="1.9" fill="#fff"/><circle cx="18.1" cy="14.3" r="1.9" fill="#fff"/></svg>
<svg style="left:1580px;top:295px" width="150" height="135" viewBox="0 0 150 135" ><path fill="#f58532" d="M130.6 9L88.5 23.1L100.6 28.75L15.4 120.3A2.5 2.5 0 0 0 18.9 123.9L111.25 39.75L116.5 51Z"/></svg>
<span class="t" style="left:89.2px;top:192px;font-size:13.5px;font-weight:400;color:#81859b;letter-spacing:0.21px;transform:scaleX(1)">Main Navigation</span>
<span class="t" style="left:259px;top:192px;font-size:13.5px;font-weight:400;color:#81859b;letter-spacing:0.22px;transform:scaleX(1)">Masters</span>
<span class="t" style="left:379.02px;top:192px;font-size:13.5px;font-weight:400;color:#81859b;letter-spacing:0px;transform:scaleX(0.9759)">Business</span>
<span class="t" style="left:504px;top:192px;font-size:13.5px;font-weight:400;color:#81859b;letter-spacing:0.41px;transform:scaleX(1)">Administration</span>
<span class="t u" style="left:1751.9px;top:129px;font-size:12.5px;font-weight:400;color:#4d526c;letter-spacing:0px;transform:scaleX(1.1)">Admin Serum</span>
<span class="t" style="left:1750.96px;top:146px;font-size:12px;font-weight:400;color:#a1a5b7;letter-spacing:0px;transform:scaleX(1.044)">Serum</span>
<span class="t m" style="left:177.38px;top:264px;font-size:17px;font-weight:400;color:#3b4863;letter-spacing:0.42px;transform:scaleX(1.12)">Request for Proposal</span>
<span class="t" style="left:1672.7px;top:229px;font-size:9.5px;font-weight:400;color:#ededed;letter-spacing:0.32px;transform:scaleX(1.12)">New Request for Proposal</span>
<span class="t c" style="left:148.51px;top:348px;font-size:12px;font-weight:400;color:#434955;letter-spacing:0px;transform:scaleX(1.09)">Show</span>
<span class="t c" style="left:254.7px;top:348px;font-size:12px;font-weight:400;color:#434955;letter-spacing:0px;transform:scaleX(1.119)">entries</span>
<span class="t c" style="left:1535.88px;top:348px;font-size:12px;font-weight:400;color:#434955;letter-spacing:0px;transform:scaleX(1.119)">Search:</span>
<span class="t" style="left:192.9px;top:348px;font-size:9.5px;font-weight:400;color:#74788d;letter-spacing:0px;transform:scaleX(0.95)">10</span>
<span class="t" style="left:159.4px;top:396px;font-size:11.5px;font-weight:700;color:#15171c;letter-spacing:0px;transform:scaleX(0.9697)">SL.No</span>
<span class="t" style="left:219.7px;top:396px;font-size:11.5px;font-weight:700;color:#15171c;letter-spacing:0.09px;transform:scaleX(1.12)">Document Number</span>
<span class="t" style="left:571.7px;top:396px;font-size:11.5px;font-weight:700;color:#15171c;letter-spacing:0px;transform:scaleX(1.113)">Requirement Description</span>
<span class="t" style="left:923.75px;top:396px;font-size:11.5px;font-weight:700;color:#15171c;letter-spacing:0px;transform:scaleX(1.103)">Submission Deadline</span>
<span class="t" style="left:1118.75px;top:396px;font-size:11.5px;font-weight:700;color:#15171c;letter-spacing:0.07px;transform:scaleX(1.12)">Document Date</span>
<span class="t" style="left:1275px;top:396px;font-size:11.5px;font-weight:700;color:#15171c;letter-spacing:0px;transform:scaleX(1.114)">Status</span>
<span class="t" style="left:1627.25px;top:396px;font-size:11.5px;font-weight:700;color:#15171c;letter-spacing:0px;transform:scaleX(1.114)">Action</span>
<span class="t c" style="left:158.2px;top:496px;font-size:11.5px;font-weight:400;color:#43474f;letter-spacing:0px;transform:scaleX(1)"><span class="dg">1</span></span>
<span class="t c" style="left:219.7px;top:496px;font-size:11.5px;font-weight:400;color:#43474f;letter-spacing:0px;transform:scaleX(0.9286)"><span class="dg">2025</span>RQ<span class="dg">1350</span></span>
<span class="t c" style="left:571.9px;top:498px;font-size:11.5px;font-weight:400;color:#43474f;letter-spacing:0.31px;transform:scaleX(1.12)">Sale Quotation to Inbound Quotation</span>
<span class="t c" style="left:923.75px;top:496px;font-size:11.5px;font-weight:400;color:#43474f;letter-spacing:0px;transform:scaleX(1.033)"><span class="dg">02-05-2025</span></span>
<span class="t c" style="left:1118.75px;top:496px;font-size:11.5px;font-weight:400;color:#43474f;letter-spacing:0px;transform:scaleX(1.033)"><span class="dg">02-05-2025</span></span>
<span class="t c" style="left:1274.76px;top:498px;font-size:11.5px;font-weight:400;color:#43474f;letter-spacing:0px;transform:scaleX(0.9437)">PUBLISHED</span>
<span class="t c" style="left:159.2px;top:542px;font-size:11.5px;font-weight:400;color:#43474f;letter-spacing:0px;transform:scaleX(1)"><span class="dg">2</span></span>
<span class="t c" style="left:219.7px;top:542px;font-size:11.5px;font-weight:400;color:#43474f;letter-spacing:0px;transform:scaleX(0.9286)"><span class="dg">2025</span>RQ<span class="dg">1349</span></span>
<span class="t c" style="left:570.78px;top:544px;font-size:11.5px;font-weight:400;color:#43474f;letter-spacing:0.42px;transform:scaleX(1.12)">Evaluation</span>
<span class="t c" style="left:923.75px;top:542px;font-size:11.5px;font-weight:400;color:#43474f;letter-spacing:0px;transform:scaleX(1.033)"><span class="dg">30-04-2025</span></span>
<span class="t c" style="left:1118.75px;top:542px;font-size:11.5px;font-weight:400;color:#43474f;letter-spacing:0px;transform:scaleX(1.033)"><span class="dg">30-04-2025</span></span>
<span class="t c" style="left:1274.76px;top:544px;font-size:11.5px;font-weight:400;color:#43474f;letter-spacing:0px;transform:scaleX(0.9437)">PUBLISHED</span>
<span class="t c" style="left:159.2px;top:587px;font-size:11.5px;font-weight:400;color:#43474f;letter-spacing:0px;transform:scaleX(1)"><span class="dg">3</span></span>
<span class="t c" style="left:219.7px;top:587px;font-size:11.5px;font-weight:400;color:#43474f;letter-spacing:0px;transform:scaleX(0.9286)"><span class="dg">2025</span>RQ<span class="dg">1348</span></span>
<span class="t c" style="left:570.78px;top:589px;font-size:11.5px;font-weight:400;color:#43474f;letter-spacing:0.22px;transform:scaleX(1.12)">Request for Proposal to Opportunity</span>
<span class="t c" style="left:923.75px;top:587px;font-size:11.5px;font-weight:400;color:#43474f;letter-spacing:0px;transform:scaleX(1.033)"><span class="dg">30-04-2025</span></span>
<span class="t c" style="left:1118.75px;top:587px;font-size:11.5px;font-weight:400;color:#43474f;letter-spacing:0px;transform:scaleX(1.033)"><span class="dg">30-04-2025</span></span>
<span class="t c" style="left:1274.76px;top:589px;font-size:11.5px;font-weight:400;color:#43474f;letter-spacing:0px;transform:scaleX(0.9437)">PUBLISHED</span>
<span class="t c" style="left:159.2px;top:634px;font-size:11.5px;font-weight:400;color:#43474f;letter-spacing:0px;transform:scaleX(1)"><span class="dg">4</span></span>
<span class="t c" style="left:219.7px;top:634px;font-size:11.5px;font-weight:400;color:#43474f;letter-spacing:0px;transform:scaleX(0.9286)"><span class="dg">2025</span>RQ<span class="dg">1347</span></span>
<span class="t c" style="left:571.9px;top:636px;font-size:11.5px;font-weight:400;color:#43474f;letter-spacing:0.39px;transform:scaleX(1.12)">ghsuuw</span>
<span class="t c" style="left:923.75px;top:634px;font-size:11.5px;font-weight:400;color:#43474f;letter-spacing:0px;transform:scaleX(1.033)"><span class="dg">30-04-2025</span></span>
<span class="t c" style="left:1118.75px;top:634px;font-size:11.5px;font-weight:400;color:#43474f;letter-spacing:0px;transform:scaleX(1.033)"><span class="dg">30-04-2025</span></span>
<span class="t c" style="left:1274.72px;top:636px;font-size:11.5px;font-weight:400;color:#43474f;letter-spacing:0px;transform:scaleX(0.9797)">DRAFT</span>
<span class="t c" style="left:158.2px;top:679px;font-size:11.5px;font-weight:400;color:#43474f;letter-spacing:0px;transform:scaleX(1)"><span class="dg">5</span></span>
<span class="t c" style="left:219.7px;top:679px;font-size:11.5px;font-weight:400;color:#43474f;letter-spacing:0px;transform:scaleX(0.9286)"><span class="dg">2025</span>RQ<span class="dg">1346</span></span>
<span class="t c" style="left:571.9px;top:681px;font-size:11.5px;font-weight:400;color:#43474f;letter-spacing:0.42px;transform:scaleX(1.12)">yeueu</span>
<span class="t c" style="left:923.75px;top:679px;font-size:11.5px;font-weight:400;color:#43474f;letter-spacing:0px;transform:scaleX(1.033)"><span class="dg">30-04-2025</span></span>
<span class="t c" style="left:1118.75px;top:679px;font-size:11.5px;font-weight:400;color:#43474f;letter-spacing:0px;transform:scaleX(1.033)"><span class="dg">30-04-2025</span></span>
<span class="t c" style="left:1274.76px;top:681px;font-size:11.5px;font-weight:400;color:#43474f;letter-spacing:0px;transform:scaleX(0.9437)">PUBLISHED</span>
<span class="t c" style="left:159.2px;top:726px;font-size:11.5px;font-weight:400;color:#43474f;letter-spacing:0px;transform:scaleX(1)"><span class="dg">6</span></span>
<span class="t c" style="left:219.7px;top:726px;font-size:11.5px;font-weight:400;color:#43474f;letter-spacing:0px;transform:scaleX(0.9286)"><span class="dg">2025</span>RQ<span class="dg">1345</span></span>
<span class="t c" style="left:571.9px;top:728px;font-size:11.5px;font-weight:400;color:#43474f;letter-spacing:0.58px;transform:scaleX(1.12)">tweywu</span>
<span class="t c" style="left:923.75px;top:726px;font-size:11.5px;font-weight:400;color:#43474f;letter-spacing:0px;transform:scaleX(1.033)"><span class="dg">30-04-2025</span></span>
<span class="t c" style="left:1118.75px;top:726px;font-size:11.5px;font-weight:400;color:#43474f;letter-spacing:0px;transform:scaleX(1.033)"><span class="dg">30-04-2025</span></span>
<span class="t c" style="left:1274.72px;top:728px;font-size:11.5px;font-weight:400;color:#43474f;letter-spacing:0px;transform:scaleX(0.9797)">DRAFT</span>
<span class="t c" style="left:159.2px;top:772px;font-size:11.5px;font-weight:400;color:#43474f;letter-spacing:0px;transform:scaleX(1)"><span class="dg">7</span></span>
<span class="t c" style="left:219.7px;top:772px;font-size:11.5px;font-weight:400;color:#43474f;letter-spacing:0px;transform:scaleX(0.9286)"><span class="dg">2025</span>RQ<span class="dg">1344</span></span>
<span class="t c" style="left:571.9px;top:774px;font-size:11.5px;font-weight:400;color:#43474f;letter-spacing:0.31px;transform:scaleX(1.12)">Sale Quotation to Inbound Quotation</span>
<span class="t c" style="left:923.75px;top:772px;font-size:11.5px;font-weight:400;color:#43474f;letter-spacing:0px;transform:scaleX(1.033)"><span class="dg">30-04-2025</span></span>
<span class="t c" style="left:1118.75px;top:772px;font-size:11.5px;font-weight:400;color:#43474f;letter-spacing:0px;transform:scaleX(1.033)"><span class="dg">30-04-2025</span></span>
<span class="t c" style="left:1274.76px;top:774px;font-size:11.5px;font-weight:400;color:#43474f;letter-spacing:0px;transform:scaleX(0.9437)">PUBLISHED</span>
<span class="t c" style="left:159.2px;top:818px;font-size:11.5px;font-weight:400;color:#43474f;letter-spacing:0px;transform:scaleX(1)"><span class="dg">8</span></span>
<span class="t c" style="left:219.7px;top:818px;font-size:11.5px;font-weight:400;color:#43474f;letter-spacing:0px;transform:scaleX(0.9286)"><span class="dg">2025</span>RQ<span class="dg">1343</span></span>
<span class="t c" style="left:570.83px;top:820px;font-size:11.5px;font-weight:400;color:#43474f;letter-spacing:0px;transform:scaleX(1.071)">Public RFP</span>
<span class="t c" style="left:923.75px;top:818px;font-size:11.5px;font-weight:400;color:#43474f;letter-spacing:0px;transform:scaleX(1.033)"><span class="dg">29-04-2025</span></span>
<span class="t c" style="left:1118.75px;top:818px;font-size:11.5px;font-weight:400;color:#43474f;letter-spacing:0px;transform:scaleX(1.033)"><span class="dg">29-04-2025</span></span>
<span class="t c" style="left:1274.76px;top:820px;font-size:11.5px;font-weight:400;color:#43474f;letter-spacing:0px;transform:scaleX(0.9437)">PUBLISHED</span>
<span class="t c" style="left:159.2px;top:864px;font-size:11.5px;font-weight:400;color:#43474f;letter-spacing:0px;transform:scaleX(1)"><span class="dg">9</span></span>
<span class="t c" style="left:219.7px;top:864px;font-size:11.5px;font-weight:400;color:#43474f;letter-spacing:0px;transform:scaleX(0.9286)"><span class="dg">2025</span>RQ<span class="dg">1342</span></span>
<span class="t c" style="left:570.95px;top:866px;font-size:11.5px;font-weight:400;color:#43474f;letter-spacing:0px;transform:scaleX(0.9545)">RFP</span>
<span class="t c" style="left:923.75px;top:864px;font-size:11.5px;font-weight:400;color:#43474f;letter-spacing:0px;transform:scaleX(1.033)"><span class="dg">29-04-2025</span></span>
<span class="t c" style="left:1118.75px;top:864px;font-size:11.5px;font-weight:400;color:#43474f;letter-spacing:0px;transform:scaleX(1.033)"><span class="dg">29-04-2025</span></span>
<span class="t c" style="left:1274.76px;top:866px;font-size:11.5px;font-weight:400;color:#43474f;letter-spacing:0px;transform:scaleX(0.9437)">PUBLISHED</span>
<span class="t c" style="left:158.3px;top:909px;font-size:11.5px;font-weight:400;color:#43474f;letter-spacing:-0.67px;transform:scaleX(0.9)"><span class="dg">10</span></span>
<span class="t c" style="left:219.7px;top:909px;font-size:11.5px;font-weight:400;color:#43474f;letter-spacing:0px;transform:scaleX(0.9286)"><span class="dg">2025</span>RQ<span class="dg">1341</span></span>
<span class="t c" style="left:570.78px;top:909px;font-size:11.5px;font-weight:400;color:#43474f;letter-spacing:0px;transform:scaleX(1.117)">Requirement <span class="dg">29-04-2025</span></span>
<span class="t c" style="left:923.75px;top:909px;font-size:11.5px;font-weight:400;color:#43474f;letter-spacing:0px;transform:scaleX(1.033)"><span class="dg">29-04-2025</span></span>
<span class="t c" style="left:1118.75px;top:909px;font-size:11.5px;font-weight:400;color:#43474f;letter-spacing:0px;transform:scaleX(1.033)"><span class="dg">29-04-2025</span></span>
<span class="t c" style="left:1274.72px;top:911px;font-size:11.5px;font-weight:400;color:#43474f;letter-spacing:0px;transform:scaleX(0.9797)">DRAFT</span>
<span class="t c" style="left:149.52px;top:959px;font-size:12.5px;font-weight:400;color:#43474f;letter-spacing:0px;transform:scaleX(0.9848)">Showing 1 to 10 of 1,379 entries</span>
<span class="t" style="left:1466.46px;top:958px;font-size:12.5px;font-weight:400;color:#8a8fa3;letter-spacing:0px;transform:scaleX(1.035)">Previous</span>
<span class="t" style="left:1540.7px;top:958px;font-size:12.5px;font-weight:400;color:#ffffff;letter-spacing:0px;transform:scaleX(1)">1</span>
<span class="t" style="left:1569.6px;top:958px;font-size:12.5px;font-weight:400;color:#3f4f8d;letter-spacing:0px;transform:scaleX(1)">2</span>
<span class="t" style="left:1600.2px;top:958px;font-size:12.5px;font-weight:400;color:#3f4f8d;letter-spacing:0px;transform:scaleX(1)">3</span>
<span class="t" style="left:1631.3px;top:958px;font-size:12.5px;font-weight:400;color:#3f4f8d;letter-spacing:0px;transform:scaleX(1)">4</span>
<span class="t" style="left:1662.7px;top:958px;font-size:12.5px;font-weight:400;color:#3f4f8d;letter-spacing:0px;transform:scaleX(1)">5</span>
<span class="t" style="left:1694px;top:960px;font-size:9.5px;font-weight:400;color:#3f4f8d;letter-spacing:0px;transform:scaleX(1)">…</span>
<span class="t" style="left:1723.6px;top:958px;font-size:12.5px;font-weight:400;color:#3f4f8d;letter-spacing:0px;transform:scaleX(1)">138</span>
<span class="t" style="left:1767.08px;top:958px;font-size:12.5px;font-weight:400;color:#3f4f8d;letter-spacing:0px;transform:scaleX(1.02)">Next</span>
<span class="t" style="left:1697.6px;top:124px;font-size:9px;font-weight:700;color:#ffffff;letter-spacing:0px;transform:scaleX(1)">4</span>
</div></div></body></html>
